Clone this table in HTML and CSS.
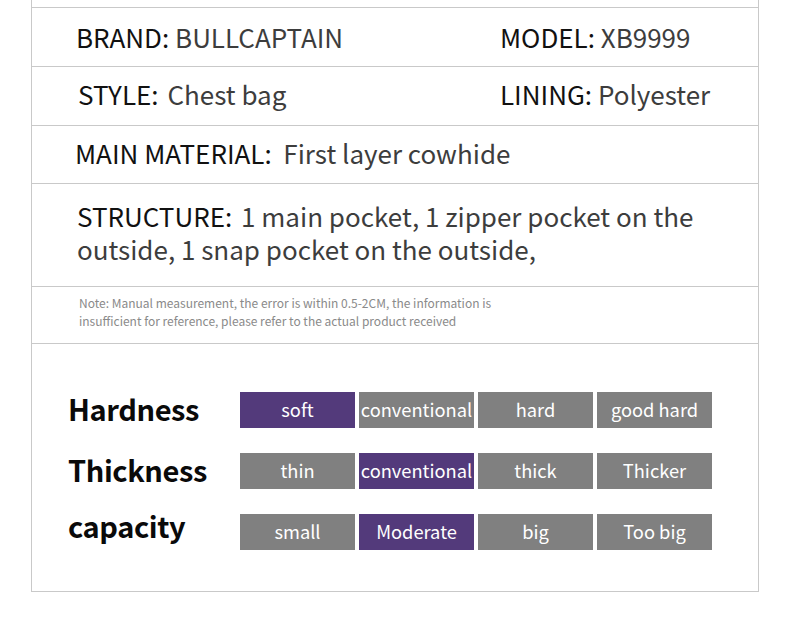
FILE: index.html
```html
<!DOCTYPE html>
<html>
<head>
<meta charset="utf-8">
<link rel="stylesheet" href="styles.css">
</head>
<body>
<div class="sheet">
  <div class="lead"></div>
  <div class="row pair r1">
    <div class="cell first"><span class="k">BRAND:</span> <span class="v">BULLCAPTAIN</span></div>
    <div class="cell"><span class="k">MODEL:</span> <span class="v">XB9999</span></div>
  </div>
  <div class="row pair r2">
    <div class="cell first s2"><span class="k">STYLE:</span> <span class="v wide">Chest bag</span></div>
    <div class="cell"><span class="k">LINING:</span> <span class="v">Polyester</span></div>
  </div>
  <div class="row single r3">
    <span class="k">MAIN MATERIAL:</span>&nbsp; <span class="v">First layer cowhide</span>
  </div>
  <div class="row single r4">
    <div class="line"><span class="k">STRUCTURE:</span> <span class="v wide">1 main pocket, 1 zipper pocket on the</span></div>
    <div class="line v">outside, 1 snap pocket on the outside,</div>
  </div>
  <div class="row note">
    <p>Note: Manual measurement, the error is within 0.5-2CM, the information is insufficient for reference, please refer to the actual product received</p>
  </div>
  <div class="row chart">
    <div class="scale">
      <div class="label">Hardness</div>
      <div class="bar on">soft</div>
      <div class="bar">conventional</div>
      <div class="bar">hard</div>
      <div class="bar">good hard</div>

      <div class="label">Thickness</div>
      <div class="bar">thin</div>
      <div class="bar on">conventional</div>
      <div class="bar">thick</div>
      <div class="bar">Thicker</div>

      <div class="label up">capacity</div>
      <div class="bar">small</div>
      <div class="bar on">Moderate</div>
      <div class="bar">big</div>
      <div class="bar">Too big</div>
    </div>
  </div>
</div>
</body>
</html>
```

FILE: styles.css
```css
html, body {
  margin: 0;
  padding: 0;
  background: #ffffff;
}

body {
  font-family: "Noto Sans CJK SC", "Source Sans Pro", "Noto Sans", sans-serif;
}

.sheet {
  margin-left: 31px;
  width: 728px;
  box-sizing: border-box;
  border-left: 1px solid #c9c9c9;
  border-right: 1px solid #c9c9c9;
  border-bottom: 1px solid #c9c9c9;
}

.lead {
  height: 7px;
}

.row {
  border-top: 1px solid #c9c9c9;
  box-sizing: border-box;
}

.k {
  color: #111111;
}

.v {
  color: #3d3d3d;
}

.v.wide {
  margin-left: 3px;
}

.pair {
  display: grid;
  grid-template-columns: 424px 1fr;
  align-items: center;
  font-size: 26px;
  line-height: 32px;
  padding-left: 44px;
}

.r1 {
  height: 59px;
  padding-bottom: 1px;
}

.r2 {
  height: 59px;
  padding-bottom: 4px;
}

.s2 {
  padding-left: 2px;
}

.single {
  font-size: 26px;
  line-height: 32px;
  padding-left: 43px;
}

.r3 {
  height: 58px;
  padding-top: 11px;
}

.r4 {
  height: 103px;
  padding-top: 15px;
  padding-left: 45px;
  line-height: 33px;
}

.line {
  white-space: nowrap;
}

.note {
  height: 57px;
  padding-top: 7px;
  padding-left: 47px;
}

.note p {
  margin: 0;
  max-width: 430px;
  font-size: 12px;
  line-height: 18px;
  color: #8a8a8a;
}

.chart {
  height: 248px;
  padding-top: 48px;
  padding-left: 36px;
}

.scale {
  display: grid;
  grid-template-columns: 168px repeat(4, 115px);
  grid-auto-rows: 36px;
  column-gap: 4px;
  row-gap: 25px;
}

.label {
  margin-top: -2px;
  font-size: 29px;
  font-weight: 700;
  line-height: 36px;
  color: #0a0a0a;
  letter-spacing: -0.4px;
  white-space: nowrap;
}

.label.up {
  margin-top: -7px;
}

.bar {
  background: #808080;
  color: #ffffff;
  font-size: 18.3px;
  line-height: 35px;
  text-align: center;
  white-space: nowrap;
}

.bar.on {
  background: #533a7b;
}
```
